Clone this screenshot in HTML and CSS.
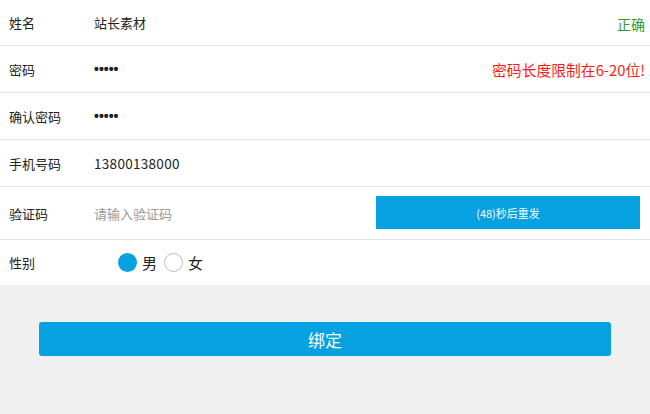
FILE: index.html
```html
<!DOCTYPE html>
<html>
<head>
<meta charset="utf-8">
<link rel="stylesheet" href="styles.css">
</head>
<body>
<div class="form">
  <div class="row">
    <span class="label">姓名</span>
    <span class="value">站长素材</span>
    <span class="tip ok">正确</span>
  </div>
  <div class="row">
    <span class="label">密码</span>
    <span class="value dots">•••••</span>
    <span class="tip err">密码长度限制在6-20位!</span>
  </div>
  <div class="row">
    <span class="label">确认密码</span>
    <span class="value dots">•••••</span>
  </div>
  <div class="row">
    <span class="label">手机号码</span>
    <span class="value digits">13800138000</span>
  </div>
  <div class="row row-code">
    <span class="label">验证码</span>
    <span class="value placeholder">请输入验证码</span>
    <button class="send">(48)秒后重发</button>
  </div>
  <div class="row row-sex">
    <span class="label">性别</span>
    <div class="radios">
      <span class="radio checked"></span><span class="rlabel">男</span>
      <span class="radio"></span><span class="rlabel">女</span>
    </div>
  </div>
</div>
<div class="actions">
  <button class="bind">绑定</button>
</div>
</body>
</html>
```
FILE: styles.css
```css
html, body {
  margin: 0;
  padding: 0;
}
body {
  background: #f0f0f0;
  font-family: "Noto Sans CJK SC", "Liberation Sans", sans-serif;
  font-size: 13px;
  color: #222;
  width: 650px;
  height: 414px;
  overflow: hidden;
}
.form {
  background: #fff;
}
.row {
  display: flex;
  align-items: center;
  height: 47px;
  box-sizing: border-box;
  border-bottom: 1px solid #e6e6e6;
  padding: 0 5px 0 9px;
}
.row:first-child {
  height: 46px;
}
.label {
  width: 85px;
  flex: none;
}
.value {
  flex: 1;
}
.dots {
  font-family: "Liberation Sans", sans-serif;
  font-size: 14px;
  font-weight: bold;
  letter-spacing: 0;
}
.digits {
  font-size: 13.5px;
  letter-spacing: 0.3px;
}
.placeholder {
  color: #999;
}
.tip {
  font-size: 14px;
}
.ok {
  color: #2f9a2a;
  padding-top: 2px;
}
.err {
  color: #ff1a1a;
  font-size: 14.8px;
}
.row-code {
  height: 53px;
  padding-right: 10px;
}
.send {
  width: 264px;
  height: 33px;
  border: none;
  background: #05a1e0;
  color: #fff;
  font-family: "Noto Sans CJK SC", sans-serif;
  font-size: 11px;
  padding: 0;
  margin-top: -1px;
}
.row-sex {
  height: 45px;
  border-bottom: none;
}
.radios {
  display: flex;
  align-items: center;
  margin-left: 24px;
}
.radio {
  width: 19px;
  height: 19px;
  border-radius: 50%;
  box-sizing: border-box;
  border: 1px solid #bbb;
  background: #fff;
}
.radio.checked {
  border: none;
  background: #05a1e0;
}
.rlabel {
  font-size: 15px;
  margin: 0 7px 0 5px;
}
.actions {
  padding: 37px 39px 0 39px;
}
.bind {
  width: 572px;
  height: 34px;
  border: none;
  border-radius: 3px;
  background: #05a1e0;
  color: #fff;
  font-family: "Noto Sans CJK SC", sans-serif;
  font-size: 17px;
  padding: 0;
}
```
